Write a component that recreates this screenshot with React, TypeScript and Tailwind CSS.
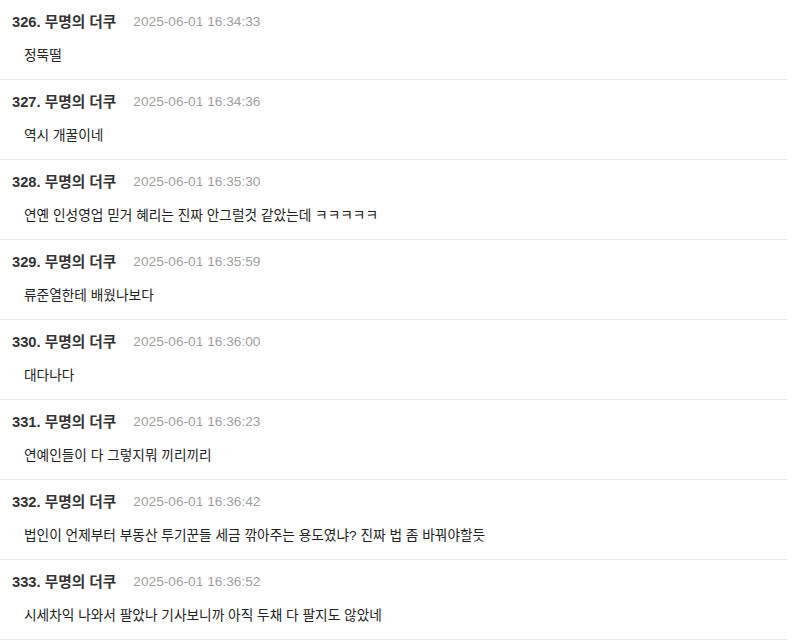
const comments = [
  { no: 326, time: '2025-06-01 16:34:33', text: '정뚝떨' },
  { no: 327, time: '2025-06-01 16:34:36', text: '역시 개꿀이네' },
  { no: 328, time: '2025-06-01 16:35:30', text: '연옌 인성영업 믿거 혜리는 진짜 안그럴것 같았는데 ㅋㅋㅋㅋㅋ' },
  { no: 329, time: '2025-06-01 16:35:59', text: '류준열한테 배웠나보다' },
  { no: 330, time: '2025-06-01 16:36:00', text: '대다나다' },
  { no: 331, time: '2025-06-01 16:36:23', text: '연예인들이 다 그렇지뭐 끼리끼리' },
  { no: 332, time: '2025-06-01 16:36:42', text: '법인이 언제부터 부동산 투기꾼들 세금 깎아주는 용도였냐? 진짜 법 좀 바꿔야할듯' },
  { no: 333, time: '2025-06-01 16:36:52', text: '시세차익 나와서 팔았나 기사보니까 아직 두채 다 팔지도 않았네' },
]

export default function App() {
  return (
    <div className="w-[787px] h-[640px] overflow-hidden bg-white font-['Liberation_Sans','Noto_Sans_CJK_KR',sans-serif]">
      {comments.map((c) => (
        <div key={c.no} className="h-[80px] border-b border-[#e9e9e9] px-3 pt-[10px]">
          <div className="flex items-center h-6">
            <span className="text-[14.7px] font-bold text-[#333]">{c.no}. 무명의 더쿠</span>
            <span className="ml-[17px] text-[13.7px] text-[#a0a0a0]">{c.time}</span>
          </div>
          <p className="mt-[11px] pl-3 h-[22px] leading-[22px] text-[13.7px] text-[#222]">{c.text}</p>
        </div>
      ))}
    </div>
  )
}
